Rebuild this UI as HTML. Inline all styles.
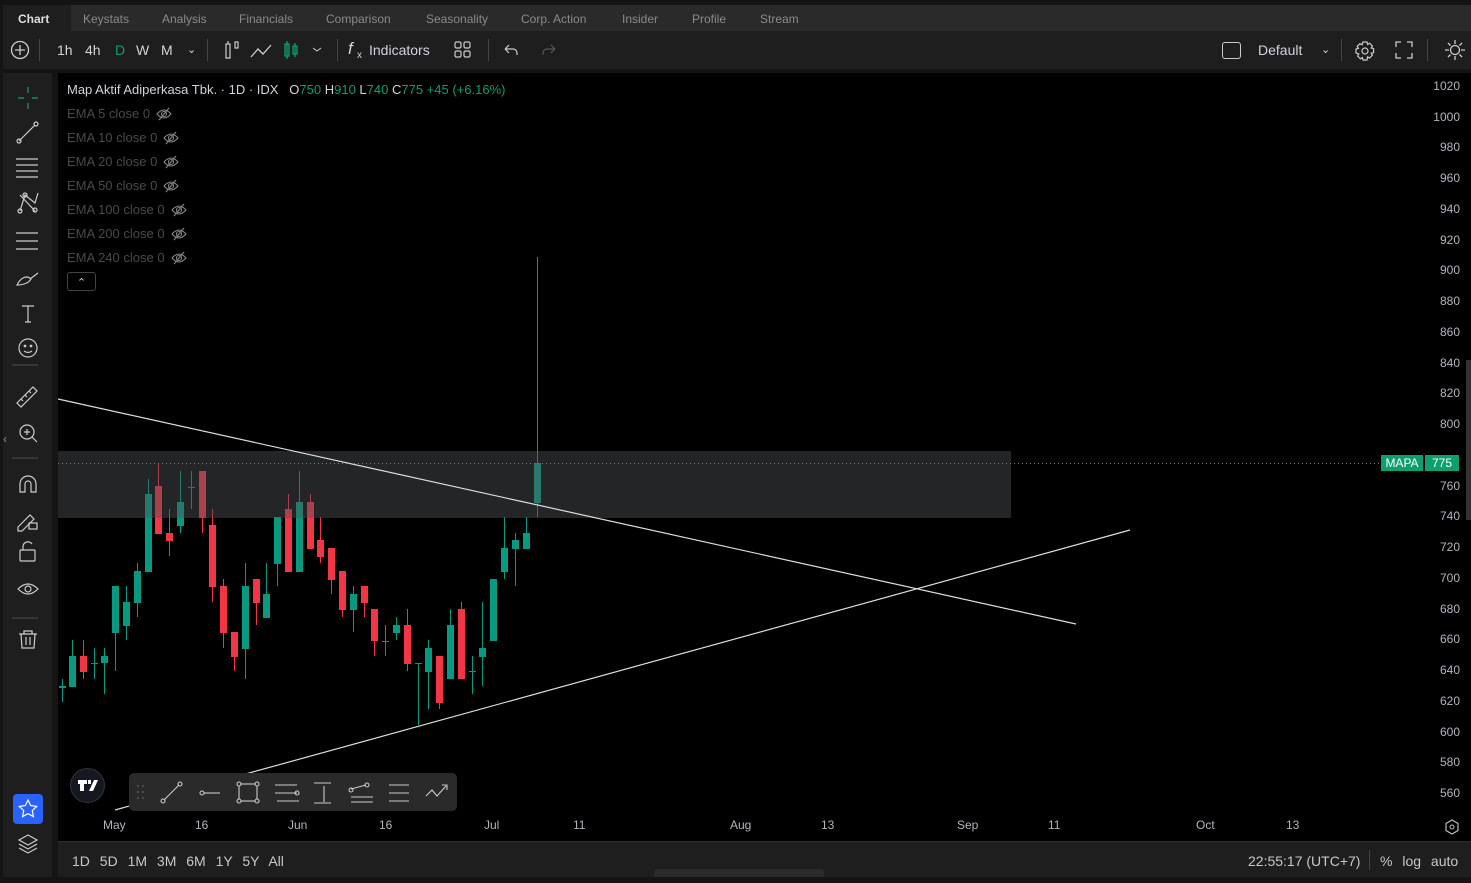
<!DOCTYPE html>
<html><head><meta charset="utf-8"><style>
*{margin:0;padding:0;box-sizing:border-box}
body{width:1471px;height:883px;background:#141414;font-family:"Liberation Sans",sans-serif;position:relative;overflow:hidden;color:#d1d4dc}
.abs{position:absolute}
.tabs{left:3px;top:5px;width:1468px;height:26px;background:#2a2a2a}
.tabs span{position:absolute;top:7px;font-size:12px;color:#8a8a8a}
.tb{left:3px;top:31px;width:1468px;height:38px;background:#1e1e1e}
.tb span{position:absolute;font-size:14px;color:#d1d4dc;top:11px}
.lt{left:3px;top:73px;width:49px;height:804px;background:#1e1e1e}
.chart{left:58px;top:73px;width:1413px;height:768px;background:#000}
.bb{left:58px;top:842px;width:1413px;height:35px;background:#1e1e1e}
.ema{position:absolute;left:67px;font-size:13px;color:#4a4a4a;white-space:nowrap}
.ema svg{vertical-align:-3px;margin-left:6px}
.ax{position:absolute;right:11px;font-size:12px;color:#b2b5be}
.dt{position:absolute;top:818px;font-size:12px;color:#b2b5be}
</style></head><body>
<div class="abs tabs">
<div class="abs" style="left:0;top:0;width:68px;height:26px;background:#1e1e1e"></div>
<span style="left:15px;color:#ddd;font-weight:bold">Chart</span>
<span style="left:80px">Keystats</span><span style="left:159px">Analysis</span><span style="left:236px">Financials</span><span style="left:323px">Comparison</span><span style="left:423px">Seasonality</span><span style="left:518px">Corp. Action</span><span style="left:619px">Insider</span><span style="left:689px">Profile</span><span style="left:757px">Stream</span>
</div>
<div class="abs tb">
<svg class="abs" style="left:7px;top:9px" width="20" height="20"><circle cx="10" cy="10" r="8.5" fill="none" stroke="#ccc" stroke-width="1.3"/><path d="M10 5v10M5 10h10" stroke="#ccc" stroke-width="1.3"/></svg>
<div class="abs" style="left:36px;top:8px;width:1px;height:22px;background:#444"></div>
<span style="left:54px">1h</span><span style="left:82px">4h</span><span style="left:112px;color:#0e9f6e">D</span><span style="left:133px">W</span><span style="left:158px">M</span><span style="left:184px;font-size:11px;top:12px">⌄</span>
<div class="abs" style="left:204px;top:8px;width:1px;height:22px;background:#444"></div>
<svg class="abs" style="left:218px;top:7px" width="110" height="24"><path d="M5 6v14h4V6zM7 3v3M14 4v6h3V4z" stroke="#ccc" fill="none" stroke-width="1.2"/><path d="M30 19l7-8 5 5 8-9" stroke="#ccc" fill="none" stroke-width="1.3"/><path d="M64 6h4v12h-4zM66 3v18M72 8h4v8h-4zM74 5v14" stroke="#0e9f6e" fill="none" stroke-width="1.3"/><path d="M92 10l4 3 4-3" stroke="#ccc" fill="none"/></svg>
<div class="abs" style="left:334px;top:8px;width:1px;height:22px;background:#444"></div>
<span style="left:345px;font-style:italic;font-size:17px;top:8px">f</span><span style="left:354px;font-size:10px;top:19px">x</span>
<span style="left:366px">Indicators</span>
<svg class="abs" style="left:451px;top:10px" width="18" height="18"><g fill="none" stroke="#ccc" stroke-width="1.2"><rect x="1" y="1" width="6" height="6" rx="1.5"/><rect x="10" y="1" width="6" height="6" rx="1.5"/><rect x="1" y="10" width="6" height="6" rx="1.5"/><rect x="10" y="10" width="6" height="6" rx="1.5"/></g></svg>
<div class="abs" style="left:485px;top:8px;width:1px;height:22px;background:#444"></div>
<svg class="abs" style="left:498px;top:10px" width="60" height="18"><path d="M4 8h8a4 4 0 0 1 4 4v2M4 8l4-4M4 8l4 4" stroke="#ccc" fill="none" stroke-width="1.2"/><path d="M54 8h-8a4 4 0 0 0-4 4v2M54 8l-4-4M54 8l-4 4" stroke="#555" fill="none" stroke-width="1.2"/></svg>
<div class="abs" style="left:1219px;top:11px;width:19px;height:17px;border:1.3px solid #ccc;border-radius:3px"></div>
<span style="left:1255px">Default</span><span style="left:1318px;font-size:11px;top:12px">⌄</span>
<div class="abs" style="left:1338px;top:8px;width:1px;height:22px;background:#444"></div>
<svg class="abs" style="left:1350px;top:8px" width="24" height="24"><circle cx="12" cy="12" r="3" fill="none" stroke="#ccc" stroke-width="1.2"/><path d="M10 3h4l.6 2.4 2-1.2 2.8 2.8-1.2 2 2.4.6v4l-2.4.6 1.2 2-2.8 2.8-2-1.2L14 21h-4l-.6-2.4-2 1.2-2.8-2.8 1.2-2L3 14v-4l2.4-.6-1.2-2 2.8-2.8 2 1.2z" fill="none" stroke="#ccc" stroke-width="1.2"/></svg>
<svg class="abs" style="left:1392px;top:10px" width="18" height="18"><path d="M1 6V1h5M12 1h5v5M17 12v5h-5M6 17H1v-5" fill="none" stroke="#ccc" stroke-width="1.3"/></svg>
<div class="abs" style="left:1424px;top:8px;width:1px;height:22px;background:#444"></div>
<svg class="abs" style="left:1441px;top:8px" width="22" height="22"><circle cx="11" cy="11" r="4.5" fill="none" stroke="#ccc" stroke-width="1.3"/><path d="M11 1v4M11 17v4M1 11h4M17 11h4M4 4l2.5 2.5M15.5 15.5L18 18M4 18l2.5-2.5M15.5 6.5L18 4" stroke="#ccc" stroke-width="1.3"/></svg>
</div>
<div class="abs lt"></div>
<svg class="abs" style="left:0;top:73px" width="55" height="810" fill="none" stroke="#ccc" stroke-width="1.2">
<path d="M28 14v6M28 30v6M18 25h6M32 25h6" stroke="#0e9f6e"/>
<path d="M19 68l16-16"/><circle cx="19" cy="68" r="2"/><circle cx="36" cy="51" r="2"/>
<path d="M16 86h22M16 92h22M16 98h22M16 104h22"/>
<path d="M20 138l5-16 10 8 3-10M20 122l15 16"/><circle cx="20" cy="138" r="2"/><circle cx="25" cy="122" r="2"/><circle cx="35" cy="137" r="2"/>
<path d="M16 160h22M16 168h22M16 176h22"/>
<path d="M17 212c4-8 10-10 14-6-2 4-8 6-14 6zM30 206l8-6"/>
<path d="M22 233h12M28 233v16M25 249h6"/>
<circle cx="28" cy="275" r="9"/><circle cx="25" cy="273" r=".8"/><circle cx="31" cy="273" r=".8"/><path d="M24 278q4 3 8 0"/>
<path d="M12 292h26" stroke="#444"/>
<path d="M17 330l16-16 4 4-16 16zM21 326l2 2M25 322l2 2M29 318l2 2"/>
<circle cx="27" cy="359" r="7"/><path d="M27 356v6M24 359h6M32 364l5 5"/>
<path d="M12 385h26" stroke="#444"/>
<path d="M20 419v-8a8 8 0 0 1 16 0v8h-5v-8a3 3 0 0 0-6 0v8z"/>
<path d="M18 454l12-12 4 4-12 12h-4z"/><rect x="29" y="450" width="8" height="6"/>
<rect x="20" y="477" width="15" height="11" rx="1"/><path d="M23 477v-4a5 5 0 0 1 9-2"/>
<path d="M18 516q10-10 20 0q-10 10-20 0z"/><circle cx="28" cy="516" r="3"/>
<path d="M12 545h26" stroke="#444"/>
<path d="M19 561h18M24 561v-3h8v3M21 561l1 14h12l1-14M26 564v8M30 564v8"/>
</svg>
<div class="abs" style="left:13px;top:794px;width:30px;height:30px;background:#2962ff;border-radius:4px"></div>
<svg class="abs" style="left:13px;top:794px" width="30" height="30"><path d="M15 6l2.7 5.6 6 .8-4.4 4.2 1.1 6-5.4-3-5.4 3 1.1-6-4.4-4.2 6-.8z" fill="none" stroke="#fff" stroke-width="1.2"/></svg>
<svg class="abs" style="left:16px;top:832px" width="24" height="24" fill="none" stroke="#ccc" stroke-width="1.2"><path d="M12 3l9 5-9 5-9-5zM3 12l9 5 9-5M3 16l9 5 9-5"/></svg>
<div class="abs" style="left:3px;top:432px;width:9px;height:20px;color:#888;font-size:12px">‹</div>
<div class="abs chart"></div>
<svg class="abs" style="left:0;top:0" width="1471" height="883" id="c"></svg>
<div class="abs" style="left:67px;top:82px;font-size:13px;color:#d1d4dc;white-space:nowrap">Map Aktif Adiperkasa Tbk. · 1D · IDX &nbsp; O<span style="color:#0e9f6e">750</span> H<span style="color:#0e9f6e">910</span> L<span style="color:#0e9f6e">740</span> C<span style="color:#0e9f6e">775</span> <span style="color:#0e9f6e">+45 (+6.16%)</span></div>
<div id="emas"></div>
<div class="abs" style="left:67px;top:272px;width:29px;height:19px;border:1px solid #444;border-radius:3px;color:#ccc;font-size:11px;text-align:center;line-height:20px">⌃</div>
<div id="ax"></div>
<div class="abs" style="left:1381px;top:455px;width:42px;height:16px;background:#0e9f6e;color:#fff;font-size:12px;text-align:center;line-height:16px">MAPA</div>
<div class="abs" style="left:1425px;top:455px;width:34px;height:16px;background:#0e9f6e;color:#fff;font-size:12px;text-align:center;line-height:16px">775</div>
<div class="dt" style="left:103px">May</div><div class="dt" style="left:195px">16</div><div class="dt" style="left:288px">Jun</div><div class="dt" style="left:379px">16</div><div class="dt" style="left:484px">Jul</div><div class="dt" style="left:573px">11</div><div class="dt" style="left:730px">Aug</div><div class="dt" style="left:821px">13</div><div class="dt" style="left:957px">Sep</div><div class="dt" style="left:1048px">11</div><div class="dt" style="left:1196px">Oct</div><div class="dt" style="left:1286px">13</div>
<svg class="abs" style="left:1443px;top:818px" width="18" height="18"><path d="M9 2l6 3.5v7L9 16l-6-3.5v-7z" fill="none" stroke="#bbb" stroke-width="1.2"/><circle cx="9" cy="9" r="2" fill="none" stroke="#bbb"/></svg>
<div class="abs" style="left:70px;top:768px;width:35px;height:35px;border-radius:50%;background:#151821;border:1px solid #333"></div>
<svg class="abs" style="left:70px;top:768px" width="35" height="35"><path d="M8 12h9v4h-3v7h-4v-7H8zM18 12h3v4h-3zM24 12h4l-5 11h-4z" fill="#fff"/></svg>
<div class="abs" style="left:129px;top:773px;width:328px;height:38px;background:#2a2a2a;border-radius:5px"></div>
<svg class="abs" style="left:129px;top:773px" width="328" height="38" fill="none" stroke="#ccc" stroke-width="1.1">
<g fill="#555" stroke="none"><circle cx="9" cy="13" r="1"/><circle cx="14" cy="13" r="1"/><circle cx="9" cy="19" r="1"/><circle cx="14" cy="19" r="1"/><circle cx="9" cy="25" r="1"/><circle cx="14" cy="25" r="1"/></g>
<path d="M35 27l15-15"/><circle cx="34" cy="28" r="2"/><circle cx="51" cy="11" r="2"/>
<circle cx="73" cy="20" r="2"/><path d="M75 20h16"/>
<rect x="110" y="11" width="18" height="17"/><circle cx="110" cy="11" r="2" fill="#2a2a2a"/><circle cx="128" cy="11" r="2" fill="#2a2a2a"/><circle cx="110" cy="28" r="2" fill="#2a2a2a"/><circle cx="128" cy="28" r="2" fill="#2a2a2a"/>
<path d="M146 12h22M146 20h22M148 28h22"/><circle cx="168" cy="20" r="2"/>
<path d="M185 10h17M185 30h17M195 29v-16"/>
<path d="M222 16l15-4M222 24h22M222 29h22"/><circle cx="222" cy="17" r="2"/><circle cx="238" cy="12" r="2"/>
<path d="M260 12h20M260 20h20M260 28h20"/>
<path d="M297 23l6-6 5 6 9-10M313 12h5v5"/>
</svg>
<div class="abs bb"></div>
<div class="abs" style="left:58px;top:841px;width:1413px;height:1px;background:#2a2e39"></div>
<div class="abs" style="left:72px;top:853px;font-size:14px;color:#c8c8c8;word-spacing:6px;white-space:nowrap">1D 5D 1M 3M 6M 1Y 5Y All</div>
<div class="abs" style="left:1248px;top:853px;font-size:14px;color:#c8c8c8">22:55:17 (UTC+7)</div>
<div class="abs" style="left:1369px;top:850px;width:1px;height:20px;background:#444"></div>
<div class="abs" style="left:1380px;top:853px;font-size:14px;color:#c8c8c8;word-spacing:6px;white-space:nowrap">% log auto</div>
<div class="abs" style="left:654px;top:869px;width:170px;height:8px;background:#2a2a2a;border-radius:3px 3px 0 0"></div>
<div class="abs" style="left:0;top:877px;width:1471px;height:6px;background:#141414"></div>
<script>
var eye='<svg width="16" height="14"><path d="M1 7q7-8 14 0q-7 8-14 0z" fill="none" stroke="#888" stroke-width="1.1"/><circle cx="8" cy="7" r="2.5" fill="none" stroke="#888" stroke-width="1.1"/><path d="M3 13L13 1" stroke="#888" stroke-width="1.1"/></svg>';
var em=['5','10','20','50','100','200','240'],e='';
em.forEach(function(n,i){e+='<div class="ema" style="top:'+(106+24*i)+'px">EMA '+n+' close 0'+eye+'</div>';});
document.getElementById('emas').innerHTML=e;
var d=[[62,686,688,679,702,'g'],[72,656,687,640,687,'g'],[83,656,672,640,679,'r'],[94,663,664,648,679,'g'],[104,656,663,648,694,'g'],[115,586,633,586,671,'g'],[126,602,626,586,640,'g'],[137,571,603,563,617,'g'],[148,494,572,479,572,'g'],[158,486,534,463,534,'r'],[169,533,541,509,556,'r'],[180,502,526,471,533,'g'],[191,487,488,471,509,'g'],[202,471,518,471,533,'r'],[212,525,587,509,602,'r'],[223,586,633,579,648,'r'],[234,632,657,632,671,'r'],[245,586,649,563,679,'g'],[256,579,603,579,625,'r'],[266,594,618,563,618,'g'],[277,517,564,517,586,'g'],[288,509,572,494,572,'r'],[299,502,572,471,572,'g'],[310,502,549,494,549,'r'],[320,540,557,517,563,'r'],[331,548,580,548,594,'r'],[342,571,610,571,617,'r'],[353,594,610,586,632,'g'],[364,586,603,586,617,'r'],[374,609,641,609,656,'r'],[385,641,642,625,656,'g'],[396,625,633,617,640,'g'],[407,625,664,609,671,'r'],[418,663,664,663,725,'g'],[428,648,672,640,709,'g'],[439,656,703,656,709,'r'],[450,625,679,609,679,'g'],[461,609,679,602,679,'r'],[472,671,672,656,694,'g'],[482,648,657,602,686,'g'],[493,579,641,579,641,'g'],[504,548,572,517,579,'g'],[515,540,549,533,586,'g'],[526,533,549,517,549,'g'],[537,463,503,257,517,'g']];
var s='';
d.forEach(function(c){var col=c[5]=='g'?'#089981':'#f23645';
s+='<line x1="'+(c[0]+.5)+'" x2="'+(c[0]+.5)+'" y1="'+c[3]+'" y2="'+c[4]+'" stroke="'+col+'"/>';
var h=c[2]-c[1];if(h<2){s+='<line x1="'+(c[0]-3)+'" x2="'+(c[0]+4)+'" y1="'+c[1]+'.5" y2="'+c[1]+'.5" stroke="'+col+'"/>';}
else s+='<rect x="'+(c[0]-3)+'" y="'+c[1]+'" width="7" height="'+h+'" fill="'+col+'"/>';});
s+='<rect x="58" y="451" width="953" height="67" fill="#505257" fill-opacity="0.45"/>';
s+='<line x1="58" y1="463.5" x2="1380" y2="463.5" stroke="#26a69a" stroke-dasharray="1 3"/>';
s+='<line x1="58" y1="399" x2="1076" y2="624" stroke="#ddd" stroke-width="1.2"/>';
s+='<line x1="115" y1="810" x2="1130" y2="530" stroke="#ddd" stroke-width="1.2"/>';
s+='<rect x="1466" y="360" width="5" height="160" fill="#333"/>';
document.getElementById('c').innerHTML=s;
var a='';for(var p=1020;p>=560;p-=20){var y=86+(1020-p)*1.537;if(p==780)continue;a+='<div class="ax" style="top:'+(y-7)+'px">'+p+'</div>';}
document.getElementById('ax').innerHTML=a;
</script>
</body></html>
